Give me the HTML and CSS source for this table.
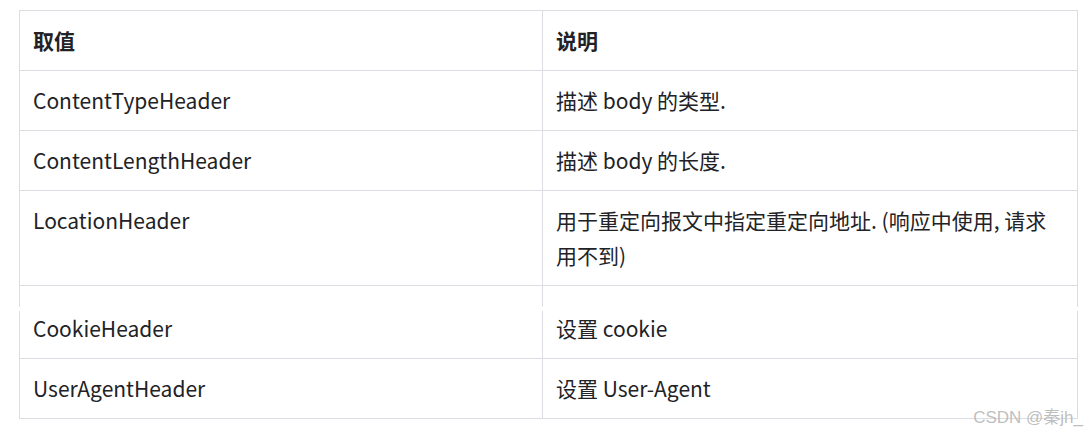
FILE: index.html
```html
<!DOCTYPE html>
<html lang="zh">
<head>
<meta charset="utf-8">
<link rel="stylesheet" href="styles.css">
</head>
<body>
<div class="wrap">
  <table class="tbl tbl-top">
    <colgroup><col class="c1"><col class="c2"></colgroup>
    <tr class="head"><th>取值</th><th>说明</th></tr>
    <tr><td>ContentTypeHeader</td><td>描述 body 的类型.</td></tr>
    <tr><td>ContentLengthHeader</td><td>描述 body 的长度.</td></tr>
    <tr><td>LocationHeader</td><td>用于重定向报文中指定重定向地址. (响应中使用, 请求用不到)</td></tr>
    <tr class="cut"><td></td><td></td></tr>
  </table>
  <table class="tbl tbl-bottom">
    <colgroup><col class="c1"><col class="c2"></colgroup>
    <tr class="resume"><td>CookieHeader</td><td>设置 cookie</td></tr>
    <tr><td>UserAgentHeader</td><td>设置 User-Agent</td></tr>
  </table>
  <div class="mark">CSDN @秦jh_</div>
</div>
</body>
</html>
```

FILE: styles.css
```css
html, body {
  margin: 0;
  padding: 0;
  background: #ffffff;
}
body {
  font-family: "Noto Sans CJK SC", "Noto Sans", sans-serif;
  color: #222226;
  min-height: 434px;
}
.wrap {
  position: relative;
  width: 1058px;
  margin: 10px 0 0 19px;
}
.tbl {
  border-collapse: collapse;
  width: 1058px;
  table-layout: fixed;
  font-size: 21px;
  line-height: 35px;
}
.c1 { width: 523px; }
.c2 { width: 535px; }
.tbl th, .tbl td {
  border: 1px solid #dcdde2;
  padding: 12px 13px;
  text-align: left;
  vertical-align: top;
}
.tbl th {
  font-weight: 700;
}
.tbl-top .cut td {
  border-bottom: none;
  height: 21px;
  padding: 0;
}
.tbl-bottom {
  margin-top: 4px;
}
.tbl-bottom .resume td {
  border-top: none;
  padding-top: 0;
}
.mark {
  position: absolute;
  right: -6px;
  bottom: -11px;
  line-height: 24px;
  font-family: "Liberation Sans", "Noto Sans CJK SC", sans-serif;
  font-size: 17px;
  color: rgba(178, 178, 178, 0.85);
  z-index: 2;
}
```
